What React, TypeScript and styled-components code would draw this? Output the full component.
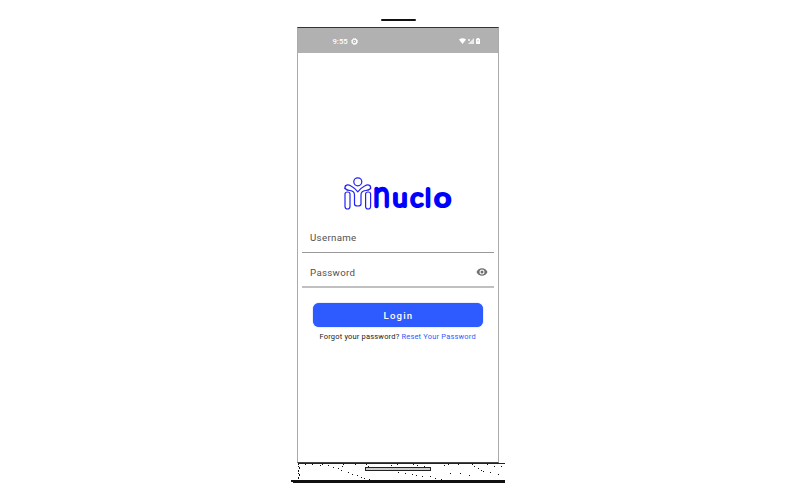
import React from 'react';
import styled, { createGlobalStyle } from 'styled-components';

const Global = createGlobalStyle`
  * { box-sizing: border-box; }
  body { margin: 0; background: #fff; font-family: Roboto, sans-serif; }
`;
const Stage = styled.main`
  width: 795px; height: 500px; overflow: hidden; background: #fff;
  display: flex; flex-direction: column; align-items: center;
`;
const Speaker = styled.div`
  width: 35px; height: 2px; margin: 19px 0 6px; background: #111; border-radius: 1px;
  transform: translateX(1px);
`;
const Phone = styled.section`
  width: 202px; height: 436px; flex: none; display: flex; flex-direction: column;
  border: 1px solid #aaa; border-top-color: #333; border-bottom: 1px solid #444;
`;
const StatusBar = styled.header`
  height: 25px; flex: none; padding: 1px 18px 0 35px; background: #b1b1b1; color: #fff;
  display: flex; align-items: center; justify-content: space-between;
  font-size: 7.7px; font-weight: 500;
`;
const StatusGroup = styled.div<{ $gap: number }>`
  display: flex; align-items: center; gap: ${p => p.$gap}px;
`;
const Brand = styled.svg`
  display: block; width: 112px; height: 38px; margin: 121px 0 0 44px; flex: none; overflow: visible;
`;
const Letter = styled.text`
  font-family: Lato, "Liberation Sans", sans-serif; font-size: 23px; font-weight: 100;
  fill: #00f; stroke: #00f; stroke-width: 4px; stroke-linejoin: round;
`;
const Initial = styled(Letter)`
  font-size: 33px; stroke-width: 4.4px; text-transform: lowercase;
`;
const Field = styled.div<{ $height: number; $top: number; $double?: boolean }>`
  height: ${p => p.$height}px; margin: 0 4px; padding: ${p => p.$top}px 6px 0 8.5px; flex: none;
  display: flex; align-items: center; justify-content: space-between;
  border-bottom: ${p => (p.$double ? '2px solid #c0c0c0' : '1px solid #999')};
  color: #505050; font-size: 9.7px; letter-spacing: 0.32px;
`;
const LoginButton = styled.button`
  width: 170px; height: 24px; margin: 15px 0 0 15px; padding: 0 0 0 2px; flex: none;
  border: 0; border-radius: 6px; background: #2d5bff; color: #fff;
  box-shadow: 0 0 1px #2d5bff;
  font: 500 9.6px Roboto, sans-serif; letter-spacing: 1.2px;
`;
const Help = styled.p`
  margin: 5px 0 0 22px; font-size: 7.5px; line-height: 10px; letter-spacing: 0.18px;
  color: #222; white-space: nowrap;
`;
const ResetLink = styled.a`color: #2f5cff;`;
const Base = styled.svg`display: block; flex: none; width: 216px; height: 22px;`;

const specks = [
  [305, 464], [312, 464], [320, 465], [322, 464], [328, 465], [333, 467], [338, 468], [341, 470], [342, 466],
  [343, 464], [348, 472], [352, 474], [357, 475], [361, 477], [364, 478], [369, 479], [355, 464], [366, 464],
  [368, 466], [391, 465], [398, 472], [397, 464], [405, 473], [413, 464], [417, 465], [424, 466], [412, 474],
  [416, 475], [422, 476], [430, 476], [435, 478], [441, 479], [444, 465], [448, 464], [450, 473], [458, 464],
  [460, 473], [469, 475], [472, 464], [474, 466], [478, 468], [481, 470], [483, 471], [487, 464], [490, 472],
  [494, 466], [498, 474], [501, 466],
];

export default function App() {
  return (
    <Stage>
      <Global />
      <Speaker />
      <Phone>
        <StatusBar>
          <StatusGroup $gap={3}>
            <span>9:55</span>
            <svg width="7" height="7" viewBox="0 0 7 7" fill="none" stroke="#fff">
              <circle cx="3.5" cy="3.5" r="2.3" strokeWidth="1.2" />
              <circle cx="3.5" cy="3.5" r="3" strokeWidth=".9" strokeDasharray="1.2 1.15" />
              <circle cx="3.5" cy="3.5" r=".6" fill="#fff" stroke="none" />
            </svg>
          </StatusGroup>
          <StatusGroup $gap={2}>
            <svg width="7" height="6" viewBox="0 0 7 6"><path d="M0 1.6Q3.5-1 7 1.6L3.5 6Z" fill="#fff" /></svg>
            <svg width="6" height="6" viewBox="0 0 6 6"><path d="M0 6L6 0V6Z" fill="#fff" opacity=".75" /><path d="M0 1l2 2M2 1L0 3" stroke="#fff" strokeWidth=".7" /></svg>
            <svg width="4" height="6" viewBox="0 0 4 6"><path d="M1 0h2v.7h1V6H0V.7h1z" fill="#fff" /><path d="M2 2v1.5" stroke="#b1b1b1" strokeWidth=".8" /></svg>
          </StatusGroup>
        </StatusBar>
        <Brand viewBox="342 174 112 38" aria-label="Nuclo">
          <g fill="none" stroke="#2222f5" strokeWidth="1.2" strokeLinejoin="round" strokeLinecap="round">
            <circle cx="357.8" cy="181.8" r="4" />
            <path d="M345 188.5C344.5 184.5 348 184.3 351 186C354 187.5 356 189.8 357.8 191.8C359.6 189.8 361.6 187.5 364.6 186C367.6 184.3 371.1 184.5 370.6 188.5" />
            <path d="M345 188.5Q347 190.5 350 190.5Q354.5 191 354.5 195V204Q354.5 206 357.8 206Q361 206 361 204V195Q361 191 365.6 190.5Q368.6 190.5 370.6 188.5" />
            <path d="M345 194Q345 192 347.5 192Q350 192 350 194V206.5Q350 209 347.5 209Q345 209 345 206.5Z" />
            <path d="M365.6 194Q365.6 192 368.1 192Q370.6 192 370.6 194V206.5Q370.6 209 368.1 209Q365.6 209 365.6 206.5Z" />
          </g>
          <Initial x="373.400" y="206" textLength="16" lengthAdjust="spacingAndGlyphs">N</Initial>
          <Letter x="393" y="206.100" textLength="14" lengthAdjust="spacingAndGlyphs">u</Letter>
          <Letter x="410.800" y="206.100" textLength="12" lengthAdjust="spacingAndGlyphs">c</Letter>
          <Letter x="425.600" y="206.100" textLength="5" lengthAdjust="spacingAndGlyphs">l</Letter>
          <Letter x="434.800" y="206.100" textLength="15.8" lengthAdjust="spacingAndGlyphs">o</Letter>
        </Brand>
        <Field $height={41} $top={10}>Username</Field>
        <Field $height={35} $top={5} $double>
          Password
          <svg width="12" height="12" viewBox="0 0 24 24" fill="#707070"><path d="M12 4.5C7 4.5 2.7 7.6 1 12c1.700 4.400 6 7.500 11 7.500s9.300-3.100 11-7.500C21.300 7.600 17 4.500 12 4.500zM12 17a5 5 0 110-10 5 5 0 010 10zm0-8a3 3 0 100 6 3 3 0 000-6z" /></svg>
        </Field>
        <LoginButton>Login</LoginButton>
        <Help>Forgot your password? <ResetLink>Reset Your Password</ResetLink></Help>
      </Phone>
      <Base viewBox="290 463 216 22" shapeRendering="crispEdges">
        {specks.map(([x, y]) => <rect key={`${x}-${y}`} x={x} y={y} width="1" height="1" fill="#111" />)}
        <path d="M298.500 463v4M299.500 467v3M298.500 470v4M299.500 474v3M298.500 477v3" stroke="#111" strokeDasharray="2 1" />
        <rect x="298" y="463" width="207" height="1" fill="#222" />
        <rect x="365" y="467" width="66" height="4" fill="#222" />
        <rect x="366" y="468" width="64" height="2" fill="#ccc" />
        <path d="M291 480H505V483H293V482H291Z" fill="#111" />
      </Base>
    </Stage>
  );
}
